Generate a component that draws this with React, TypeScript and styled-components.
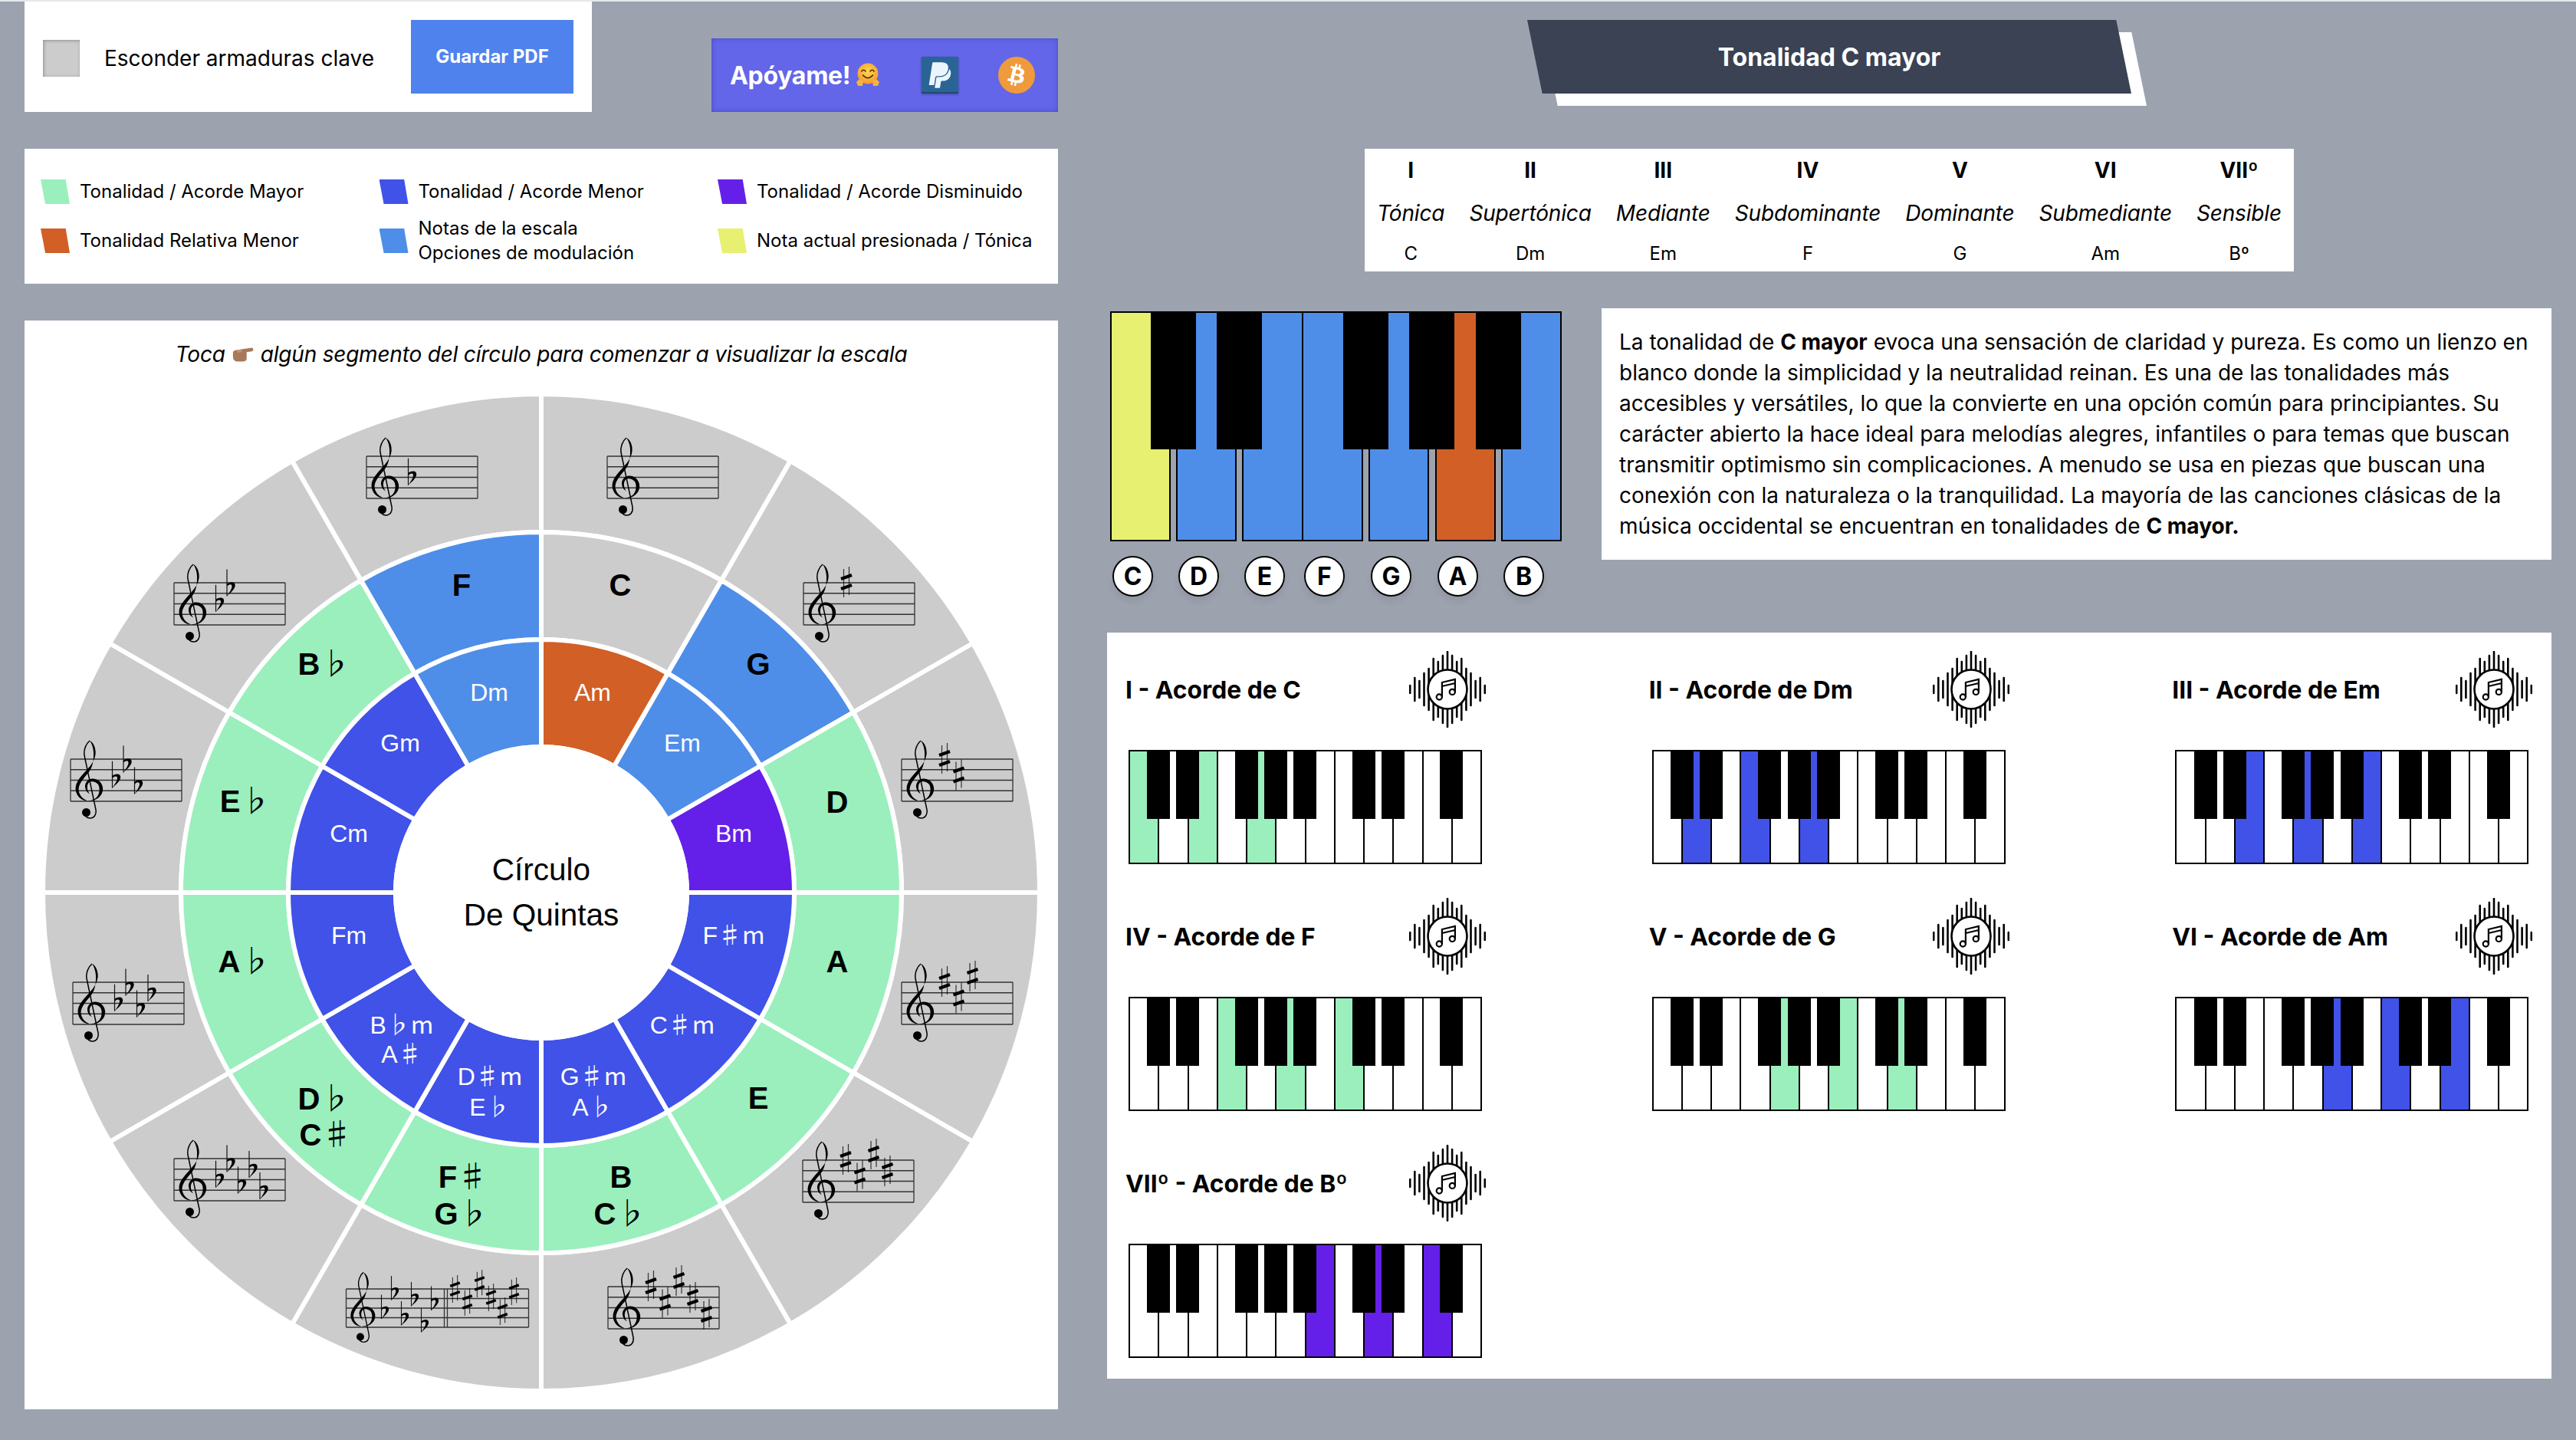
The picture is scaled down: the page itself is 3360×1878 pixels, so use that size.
import React from "react";
import styled, { createGlobalStyle } from "styled-components";
import { FaBitcoin, FaPaypal } from "react-icons/fa";

const MINT = "#9aefbd";
const INDIGO = "#4052e8";
const BLUE = "#4e8ee8";
const ORANGE = "#d15f26";
const PURPLE = "#6420e8";
const YELLOW = "#e7f070";
const GREY = "#cccccc";

const Global = createGlobalStyle`
  html, body { margin: 0; padding: 0; background: #9ca3af; }
  body { font-family: "Inter", "Liberation Sans", sans-serif; color: #000; }
  * { box-sizing: border-box; }
`;

const Page = styled.main`
  display: flex;
  gap: 64px;
  min-height: 1878px;
  padding: 0 32px;
  background: #9ca3af;
  border-top: 2px solid #e5e7eb;
`;

const LeftColumn = styled.section`
  display: flex;
  flex-direction: column;
  width: 1348px;
`;

const RightColumn = styled.section`
  display: flex;
  flex-direction: column;
  width: 1884px;
`;

/* ---------- toolbar ---------- */
const TopRow = styled.div`
  display: flex;
  align-items: flex-end;
  justify-content: space-between;
`;

const Controls = styled.div`
  display: flex;
  align-items: center;
  width: 740px;
  height: 144px;
  padding: 0 24px;
  background: #fff;
`;

const HideCheck = styled.input.attrs({ type: "checkbox" })`
  appearance: none;
  width: 48px;
  height: 48px;
  margin: 4px 0 0;
  background: ${GREY};
  box-shadow: inset 1px 1px 4px rgba(0, 0, 0, 0.3);
`;

const HideLabel = styled.label`
  margin: 4px 0 0 32px;
  font-size: 28px;
`;

const SaveButton = styled.button`
  width: 212px;
  height: 96px;
  margin-left: auto;
  padding: 0 0 2px;
  border: 0;
  background: #5082ee;
  color: #fff;
  font: 700 24px "Inter", sans-serif;
`;

const Support = styled.div`
  display: flex;
  align-items: center;
  width: 452px;
  height: 96px;
  padding: 0 30px 0 24px;
  background: #6366e8;
  box-shadow: inset 0 0 6px rgba(40, 40, 140, 0.45);
  color: #fff;
  font-size: 32px;
  font-weight: 700;
  letter-spacing: -0.3px;
`;

const SupportIcons = styled.div`
  display: flex;
  gap: 52px;
  margin-left: auto;
`;

const PaypalBadge = styled.span`
  display: flex;
  align-items: center;
  justify-content: center;
  width: 48px;
  height: 48px;
  background: #2a6496;
  box-shadow: 0 1px 3px rgba(0, 0, 0, 0.3), inset 0 -4px 0 -2px #1d4a70;
  color: #eaf5fb;
  font-size: 38px;
`;

const BitcoinBadge = styled.span`
  display: block;
  width: 48px;
  height: 48px;
  border-radius: 50%;
  background: radial-gradient(#fff 58%, #ef9a3c 60%);
  color: #ef9a3c;
  font-size: 48px;
  line-height: 0;
`;

const HugEmoji = styled.svg`
  width: 32px;
  height: 32px;
  margin-left: 7px;
`;

/* ---------- legend ---------- */
const Legend = styled.div`
  display: grid;
  grid-template-columns: repeat(3, 441.5px);
  grid-auto-rows: 32px;
  row-gap: 32px;
  align-content: center;
  height: 176px;
  margin-top: 48px;
  padding-left: 21px;
  background: #fff;
`;

const LegendItem = styled.div`
  display: flex;
  align-items: center;
  gap: 13px;
  font-size: 24px;
  line-height: 32px;
  white-space: nowrap;
`;

const LegendText = styled.span`
  margin-top: -1px;
`;

const Swatch = styled.i<{ $color: string }>`
  flex: none;
  width: 38px;
  height: 32px;
  background: ${(p) => p.$color};
  clip-path: polygon(0 0, 86% 0, 100% 100%, 16% 100%);
`;

/* ---------- wheel ---------- */
const WheelPanel = styled.div`
  display: flex;
  flex-direction: column;
  align-items: center;
  height: 1420px;
  margin-top: 48px;
  padding-top: 23px;
  background: #fff;
`;

const WheelTitle = styled.p`
  display: flex;
  align-items: center;
  gap: 8px;
  height: 42px;
  margin: 0 0 34px;
  font-size: 28px;
  font-style: italic;
  letter-spacing: -0.2px;
`;

const HandEmoji = styled.svg`
  width: 30px;
  height: 24px;
`;

const WheelSvg = styled.svg`
  display: block;
  overflow: visible;
`;

const MajorText = styled.text`
  font: 700 40px "Liberation Sans", Arial, sans-serif;
  text-anchor: middle;
  fill: #000;
`;

const MinorText = styled.text`
  font: 400 32px "Liberation Sans", Arial, sans-serif;
  text-anchor: middle;
  fill: #fff;
`;

const CenterText = styled.text`
  font: 400 40.5px "Liberation Sans", Arial, sans-serif;
  text-anchor: middle;
  fill: #000;
`;

const Accidental = styled.tspan`
  font-family: "Noto Sans CJK JP", "DejaVu Sans", sans-serif;
  font-weight: 400;
`;

/* ---------- header / tables ---------- */
const Banner = styled.div`
  position: relative;
  align-self: center;
  width: 788px;
  height: 96px;
  margin-top: 24px;
`;

const BannerShadow = styled.div`
  position: absolute;
  inset: 0;
  transform: translate(20px, 16px);
  background: #fff;
  clip-path: polygon(0 0, 97.5% 0, 100% 100%, 2.5% 100%);
`;

const BannerFace = styled.h1`
  position: relative;
  display: flex;
  align-items: center;
  justify-content: center;
  height: 96px;
  margin: 0;
  background: #3a4254;
  clip-path: polygon(0 0, 97.5% 0, 100% 100%, 2.5% 100%);
  color: #fff;
  font-size: 32px;
  font-weight: 700;
`;

const Degrees = styled.div`
  display: grid;
  grid-template-columns: repeat(7, auto);
  grid-template-rows: 56px 56px 48px;
  column-gap: 32px;
  align-self: center;
  height: 160px;
  margin-top: 72px;
  padding: 0 16px;
  background: #fff;
  text-align: center;
`;

const DegreeNumeral = styled.div`
  align-self: center;
  font-size: 28px;
  font-weight: 700;
`;

const DegreeName = styled.div`
  align-self: center;
  font-size: 28px;
  font-style: italic;
  letter-spacing: -0.15px;
`;

const DegreeChord = styled.div`
  align-self: center;
  font-size: 24px;
`;

const MiddleRow = styled.div`
  display: flex;
  justify-content: space-between;
  align-items: flex-start;
  margin-top: 48px;
`;

const BigPiano = styled.div`
  position: relative;
  display: flex;
  width: 589px;
  margin: 4px 0 0 4px;
`;

const BigKeyColumn = styled.div<{ $gap: number; $width: number }>`
  width: ${(p) => p.$width}px;
  margin-left: ${(p) => p.$gap}px;
`;

const BigWhiteKey = styled.div<{ $color: string }>`
  height: 300px;
  border: 2px solid #000;
  background: ${(p) => p.$color};
`;

const BigBlackKey = styled.div<{ $left: number }>`
  position: absolute;
  top: 0;
  left: ${(p) => p.$left}px;
  width: 59px;
  height: 180px;
  background: #000;
`;

const NoteBadge = styled.div`
  display: flex;
  align-items: center;
  justify-content: center;
  width: 53px;
  height: 53px;
  margin: 19px 0 0 3px;
  border: 2px solid #000;
  border-radius: 50%;
  background: #fff;
  box-shadow: 0 6px 8px rgba(0, 0, 0, 0.08);
  font-size: 32px;
  font-weight: 700;
`;

const Description = styled.p`
  width: 1239px;
  height: 328px;
  margin: 0;
  padding: 24px 24px 0 23px;
  background: #fff;
  font-size: 28px;
  line-height: 40px;

  strong {
    font-weight: 700;
  }
`;

/* ---------- chords ---------- */
const ChordPanel = styled.div`
  display: grid;
  grid-template-columns: repeat(3, 468px);
  column-gap: 214.67px;
  row-gap: 44px;
  align-content: start;
  height: 973px;
  margin-top: 47px;
  padding: 24px 0 0 26px;
  background: #fff;
`;

const ChordCard = styled.article`
  display: flex;
  flex-direction: column;
`;

const ChordHeader = styled.header`
  display: flex;
  align-items: center;
  justify-content: space-between;
  height: 100px;
`;

const ChordTitle = styled.h2`
  margin: 0 0 0 -2px;
  font-size: 31.8px;
  font-weight: 700;
`;

const ChordIcon = styled.svg`
  width: 100px;
  height: 100px;
`;

const MiniPiano = styled.div`
  position: relative;
  display: flex;
  width: 461px;
  height: 149px;
  margin: 29px 0 0 2px;
  border: 2px solid #000;
`;

const MiniWhiteKey = styled.div<{ $color?: string }>`
  flex: 1;
  background: ${(p) => p.$color ?? "#fff"};
  border-right: 2px solid #000;

  &:nth-last-child(9) {
    border-right: 0;
  }
`;

const MiniBlackKey = styled.div<{ $left: number }>`
  position: absolute;
  top: 0;
  left: ${(p) => p.$left}px;
  width: 30px;
  height: 88px;
  background: #000;
`;

/* ---------- data ---------- */
const sector = (a0: number, a1: number, r0: number, r1: number) => {
  const pt = (r: number, a: number) => {
    const t = ((a - 90) * Math.PI) / 180;
    return `${(r * Math.cos(t)).toFixed(2)} ${(r * Math.sin(t)).toFixed(2)}`;
  };
  return `M${pt(r0, a0)} L${pt(r1, a0)} A${r1} ${r1} 0 0 1 ${pt(r1, a1)} L${pt(r0, a1)} A${r0} ${r0} 0 0 0 ${pt(r0, a0)} Z`;
};

const middleColors = [GREY, BLUE, MINT, MINT, MINT, MINT, MINT, MINT, MINT, MINT, MINT, BLUE];
const innerColors = [ORANGE, BLUE, PURPLE, INDIGO, INDIGO, INDIGO, INDIGO, INDIGO, INDIGO, INDIGO, INDIGO, BLUE];

type Label = { x: number; y: number; t: string; a?: string };
const C = { x: 706, y: 1164 };

const majors: Label[] = [
  { x: 809, y: 763, t: "C" }, { x: 989, y: 866, t: "G" }, { x: 1092, y: 1046, t: "D" },
  { x: 1092, y: 1254, t: "A" }, { x: 989, y: 1432, t: "E" }, { x: 810, y: 1535, t: "B" },
  { x: 809, y: 1583, t: "C", a: "♭" }, { x: 604, y: 1535, t: "F", a: "♯" }, { x: 602, y: 1583, t: "G", a: "♭" },
  { x: 423, y: 1433, t: "D", a: "♭" }, { x: 425, y: 1480, t: "C", a: "♯" }, { x: 319, y: 1254, t: "A", a: "♭" },
  { x: 320, y: 1045, t: "E", a: "♭" }, { x: 423, y: 866, t: "B", a: "♭" }, { x: 602, y: 763, t: "F" },
];

const minors: Label[] = [
  { x: 638, y: 902, t: "Dm" }, { x: 773, y: 902, t: "Am" }, { x: 890, y: 968, t: "Em" },
  { x: 957, y: 1086, t: "Bm" }, { x: 957, y: 1219, t: "F", a: "♯m" }, { x: 890, y: 1336, t: "C", a: "♯m" },
  { x: 774, y: 1403, t: "G", a: "♯m" }, { x: 773, y: 1443, t: "A", a: "♭" },
  { x: 639, y: 1403, t: "D", a: "♯m" }, { x: 639, y: 1443, t: "E", a: "♭" },
  { x: 524, y: 1336, t: "B", a: "♭m" }, { x: 524, y: 1374, t: "A", a: "♯" },
  { x: 455, y: 1219, t: "Fm" }, { x: 455, y: 1086, t: "Cm" }, { x: 522, y: 968, t: "Gm" },
];

type StaffData = {
  x: number; y: number; w?: number; h?: number; s?: number;
  flats?: [number, number][]; sharps?: [number, number][]; bar?: boolean;
};

const fx = [54.5, 69, 83.5, 98, 112];
const fy = [2.7, -17.4, 10.5, -10, 18];
const flatsOf = (n: number) => fx.slice(0, n).map((x, i) => [x, fy[i]] as [number, number]);
const sx = [56, 74.5, 92.5, 110.5, 128.5];
const sy = [-1, 20.5, -8, 14, 36];
const sharpsOf = (n: number) => sx.slice(0, n).map((x, i) => [x, sy[i]] as [number, number]);

const staves: StaffData[] = [
  { x: 792, y: 595 },
  { x: 1048, y: 760, sharps: sharpsOf(1) },
  { x: 1176, y: 990, sharps: sharpsOf(2) },
  { x: 1176, y: 1281, sharps: sharpsOf(3) },
  { x: 1047, y: 1513, sharps: sharpsOf(4) },
  { x: 793, y: 1678, sharps: sharpsOf(5) },
  {
    x: 451.5, y: 1681, w: 238, h: 50, s: 0.9, bar: true,
    flats: [[46, 7.6], [59, -17], [72, 16], [85, -9], [98, 25], [111, -3.5]],
    sharps: [[142, 0], [158, 17], [174, -7], [189, 11], [204, 29], [219, 3]],
  },
  { x: 227, y: 1511, flats: flatsOf(5) },
  { x: 95, y: 1281, flats: flatsOf(4) },
  { x: 92, y: 990, flats: flatsOf(3) },
  { x: 227, y: 760, flats: flatsOf(2) },
  { x: 478, y: 595, flats: flatsOf(1) },
];

const Clef = ({ s = 1 }: { s?: number }) => (
  <g transform={`scale(${s})`}>
    <path fill="#000" d="M25 -24 C30 -22 33.5 -14 32.5 -6 C31 5 22 13 15 21 C8 29 5.5 35 7 42 C9 50 15 54 22 54.5 C14 51 10.5 45 10.5 39 C11 32 17 25 23 18 C29 11 30 2 30 -5 C30.5 -13 28 -20 25 -24 Z" />
    <path fill="#000" d="M22 54.5 C34 56 43.5 47 42 37 C41 30 35 25 28 25.5 C22.5 26 18.5 31 19 36.5 C19.5 41 22 44 25 45.5 C21 40 21 34 24 30.5 C27 28 33 29 36 33 C39 38 38 48 32 51.5 C29 53.5 25 54.5 22 54.5 Z" />
    <path fill="none" stroke="#000" strokeWidth="1.5" d="M25 -24 C20 -20 17 -12 18 -5 L33 66 C34 72 31 77 25.5 77 C21 77 18 74 19 70" />
    <circle cx="20.5" cy="69.5" r="5.5" fill="#000" />
  </g>
);

const Flat = ({ x, y, s = 1 }: { x: number; y: number; s?: number }) => (
  <g transform={`translate(${x} ${y}) scale(${s})`}>
    <path stroke="#111" strokeWidth="1.2" d="M0 0 V35" />
    <path fill="#000" d="M0 19 C5 15.5 11 16 10.7 21 C10.5 26 4 31 0 35 C3 30 6.5 26 6.5 22 C6.5 19 3 19 .5 22 Z" />
  </g>
);

const Sharp = ({ x, y, s = 1 }: { x: number; y: number; s?: number }) => (
  <g transform={`translate(${x} ${y}) scale(${s})`} stroke="#000">
    <path strokeWidth="1.2" d="M-3.5 -17 V20 M3.5 -20 V17" opacity=".75" />
    <path strokeWidth="4" d="M-7 -4 L7 -9 M-7 9 L7 4" />
  </g>
);

const Staff = ({ x, y, w = 145, h = 55, s = 1, flats = [], sharps = [], bar }: StaffData) => (
  <g transform={`translate(${x - C.x} ${y - C.y})`}>
    <g stroke="#333" strokeWidth="1.3" fill="none">
      {[0, 1, 2, 3, 4].map((i) => (
        <path key={i} d={`M0 ${(h * i) / 4} H${w}`} />
      ))}
      <path d={`M0 0 V${h} M${w} 0 V${h}`} />
      {bar && <path d={`M128 0 V${h} M132 0 V${h}`} />}
    </g>
    <Clef s={s} />
    {flats.map(([fxv, fyv], i) => <Flat key={i} x={fxv} y={fyv} s={s} />)}
    {sharps.map(([sxv, syv], i) => <Sharp key={i} x={sxv} y={syv} s={s} />)}
  </g>
);

const LabelText = ({ l, as: Comp, size }: { l: Label; as: typeof MajorText; size: number }) => (
  <Comp x={l.x - C.x} y={l.y - C.y + size * 0.36}>
    {l.t}
    {l.a && <Accidental>{l.a}</Accidental>}
  </Comp>
);

const Wheel = () => (
  <WheelSvg width={1294} height={1294} viewBox="-647 -647 1294 1294">
    {Array.from({ length: 12 }).map((_, i) => {
      const a0 = i * 30;
      const a1 = a0 + 30;
      return (
        <g key={i} stroke="#fff" strokeWidth="6">
          <path d={sector(a0, a1, 470, 650)} fill={GREY} />
          <path d={sector(a0, a1, 330, 470)} fill={middleColors[i]} />
          <path d={sector(a0, a1, 190, 330)} fill={innerColors[i]} />
        </g>
      );
    })}
    <circle r="193" fill="#fff" />
    {staves.map((st, i) => <Staff key={i} {...st} />)}
    {majors.map((l, i) => <LabelText key={i} l={l} as={MajorText} size={40} />)}
    {minors.map((l, i) => <LabelText key={i} l={l} as={MinorText} size={32} />)}
    <CenterText x="0" y="-16">Círculo</CenterText>
    <CenterText x="0" y="43">De Quintas</CenterText>
  </WheelSvg>
);

const legendItems: { color: string; text: string[] }[] = [
  { color: MINT, text: ["Tonalidad / Acorde Mayor"] },
  { color: INDIGO, text: ["Tonalidad / Acorde Menor"] },
  { color: PURPLE, text: ["Tonalidad / Acorde Disminuido"] },
  { color: ORANGE, text: ["Tonalidad Relativa Menor"] },
  { color: BLUE, text: ["Notas de la escala", "Opciones de modulación"] },
  { color: YELLOW, text: ["Nota actual presionada / Tónica"] },
];

const degrees = [
  ["I", "Tónica", "C"], ["II", "Supertónica", "Dm"], ["III", "Mediante", "Em"], ["IV", "Subdominante", "F"],
  ["V", "Dominante", "G"], ["VI", "Submediante", "Am"], ["VIIº", "Sensible", "Bº"],
];

const bigKeys = [
  { n: "C", c: YELLOW, g: 0, w: 79 }, { n: "D", c: BLUE, g: 7, w: 79 }, { n: "E", c: BLUE, g: 7, w: 80 },
  { n: "F", c: BLUE, g: -2, w: 80 }, { n: "G", c: BLUE, g: 7, w: 79 }, { n: "A", c: ORANGE, g: 8, w: 79 },
  { n: "B", c: BLUE, g: 7, w: 79 },
];
const bigBlacks = [53, 139, 304, 390, 477];

const chords = [
  { title: "I - Acorde de C", keys: [0, 2, 4], color: MINT },
  { title: "II - Acorde de Dm", keys: [1, 3, 5], color: INDIGO },
  { title: "III - Acorde de Em", keys: [2, 4, 6], color: INDIGO },
  { title: "IV - Acorde de F", keys: [3, 5, 7], color: MINT },
  { title: "V - Acorde de G", keys: [4, 6, 8], color: MINT },
  { title: "VI - Acorde de Am", keys: [5, 7, 9], color: INDIGO },
  { title: "VIIº - Acorde de Bº", keys: [6, 8, 10], color: PURPLE },
];
const blackSlots = [1, 2, 4, 5, 6, 8, 9, 11];
const barHeights = [6, 16, 12, 22, 28, 41, 37, 45, 50, 45, 37, 41, 28, 22, 12, 16, 6];

const SoundIcon = () => (
  <ChordIcon viewBox="-50 -50 100 100">
    <g stroke="#000" strokeWidth="2.6" strokeLinecap="round">
      {barHeights.map((h, i) => (
        <path key={i} d={`M${(i - 8) * 6.1} ${-h + 1} V${h - 1}`} />
      ))}
    </g>
    <circle r="25.5" fill="#fff" stroke="#000" strokeWidth="2.6" />
    <g fill="none" stroke="#000" strokeWidth="2.2">
      <circle cx="-10.7" cy="10" r="3.6" />
      <circle cx="6.3" cy="3.4" r="3.6" />
      <path d="M-7.1 10 V-9 L9.9 -13 V3.4 M-7.1 -4 L9.9 -8" />
    </g>
  </ChordIcon>
);

const App = () => (
  <>
    <Global />
    <Page>
      <LeftColumn>
        <TopRow>
          <Controls>
            <HideCheck id="hide" />
            <HideLabel htmlFor="hide">Esconder armaduras clave</HideLabel>
            <SaveButton>Guardar PDF</SaveButton>
          </Controls>
          <Support>
            Apóyame!
            <HugEmoji viewBox="0 0 32 32">
              <defs>
                <radialGradient id="hug" cx="50%" cy="40%" r="60%">
                  <stop offset="0" stopColor="#ffd84f" />
                  <stop offset="1" stopColor="#f49a2c" />
                </radialGradient>
              </defs>
              <circle cx="16" cy="14" r="13.5" fill="url(#hug)" />
              <path d="M8 11 Q10.5 7.5 13 11 M19 11 Q21.5 7.5 24 11" fill="none" stroke="#4a2a10" strokeWidth="1.6" strokeLinecap="round" />
              <path d="M9.5 16 Q16 23.5 22.5 16" fill="none" stroke="#4a2a10" strokeWidth="1.6" strokeLinecap="round" />
              <path d="M1 25 L5 21 L10 24 L9 30 L3 30 Z M31 25 L27 21 L22 24 L23 30 L29 30 Z" fill="#f7b23c" />
            </HugEmoji>
            <SupportIcons>
              <PaypalBadge><FaPaypal /></PaypalBadge>
              <BitcoinBadge><FaBitcoin /></BitcoinBadge>
            </SupportIcons>
          </Support>
        </TopRow>

        <Legend>
          {legendItems.map((item) => (
            <LegendItem key={item.text[0]}>
              <Swatch $color={item.color} />
              <LegendText>
                {item.text.map((line, i) => (
                  <React.Fragment key={line}>
                    {i > 0 && <br />}
                    {line}
                  </React.Fragment>
                ))}
              </LegendText>
            </LegendItem>
          ))}
        </Legend>

        <WheelPanel>
          <WheelTitle>
            Toca
            <HandEmoji viewBox="0 0 32 24">
              <path d="M2 10 C2 7 5 6 8 6 L14 5 L28 3 C31 3 31 8 28 8 L21 9 L21 18 C21 21 18 22 15 22 L8 22 C4 22 2 19 2 16 Z" fill="#a9785a" />
              <path d="M8 6 L14 5 L14 9 L8 10 Z" fill="#c4946f" />
            </HandEmoji>
            algún segmento del círculo para comenzar a visualizar la escala
          </WheelTitle>
          <Wheel />
        </WheelPanel>
      </LeftColumn>

      <RightColumn>
        <Banner>
          <BannerShadow />
          <BannerFace>Tonalidad C mayor</BannerFace>
        </Banner>

        <Degrees>
          {degrees.map((d) => <DegreeNumeral key={d[0]}>{d[0]}</DegreeNumeral>)}
          {degrees.map((d) => <DegreeName key={d[1]}>{d[1]}</DegreeName>)}
          {degrees.map((d) => <DegreeChord key={d[2]}>{d[2]}</DegreeChord>)}
        </Degrees>

        <MiddleRow>
          <BigPiano>
            {bigKeys.map((k) => (
              <BigKeyColumn key={k.n} $gap={k.g} $width={k.w}>
                <BigWhiteKey $color={k.c} />
                <NoteBadge>{k.n}</NoteBadge>
              </BigKeyColumn>
            ))}
            {bigBlacks.map((left) => <BigBlackKey key={left} $left={left} />)}
          </BigPiano>
          <Description>
            La tonalidad de <strong>C mayor</strong> evoca una sensación de claridad y pureza. Es como un lienzo en blanco donde la simplicidad y la neutralidad reinan. Es una de las tonalidades más accesibles y versátiles, lo que la convierte en una opción común para principiantes. Su carácter abierto la hace ideal para melodías alegres, infantiles o para temas que buscan transmitir optimismo sin complicaciones. A menudo se usa en piezas que buscan una conexión con la naturaleza o la tranquilidad. La mayoría de las canciones clásicas de la música occidental se encuentran en tonalidades de <strong>C mayor.</strong>
          </Description>
        </MiddleRow>

        <ChordPanel>
          {chords.map((ch) => (
            <ChordCard key={ch.title}>
              <ChordHeader>
                <ChordTitle>{ch.title}</ChordTitle>
                <SoundIcon />
              </ChordHeader>
              <MiniPiano>
                {Array.from({ length: 12 }).map((_, i) => (
                  <MiniWhiteKey key={i} $color={ch.keys.includes(i) ? ch.color : undefined} />
                ))}
                {blackSlots.map((k) => <MiniBlackKey key={k} $left={38.2 * k - 16} />)}
              </MiniPiano>
            </ChordCard>
          ))}
        </ChordPanel>
      </RightColumn>
    </Page>
  </>
);

export default App;
